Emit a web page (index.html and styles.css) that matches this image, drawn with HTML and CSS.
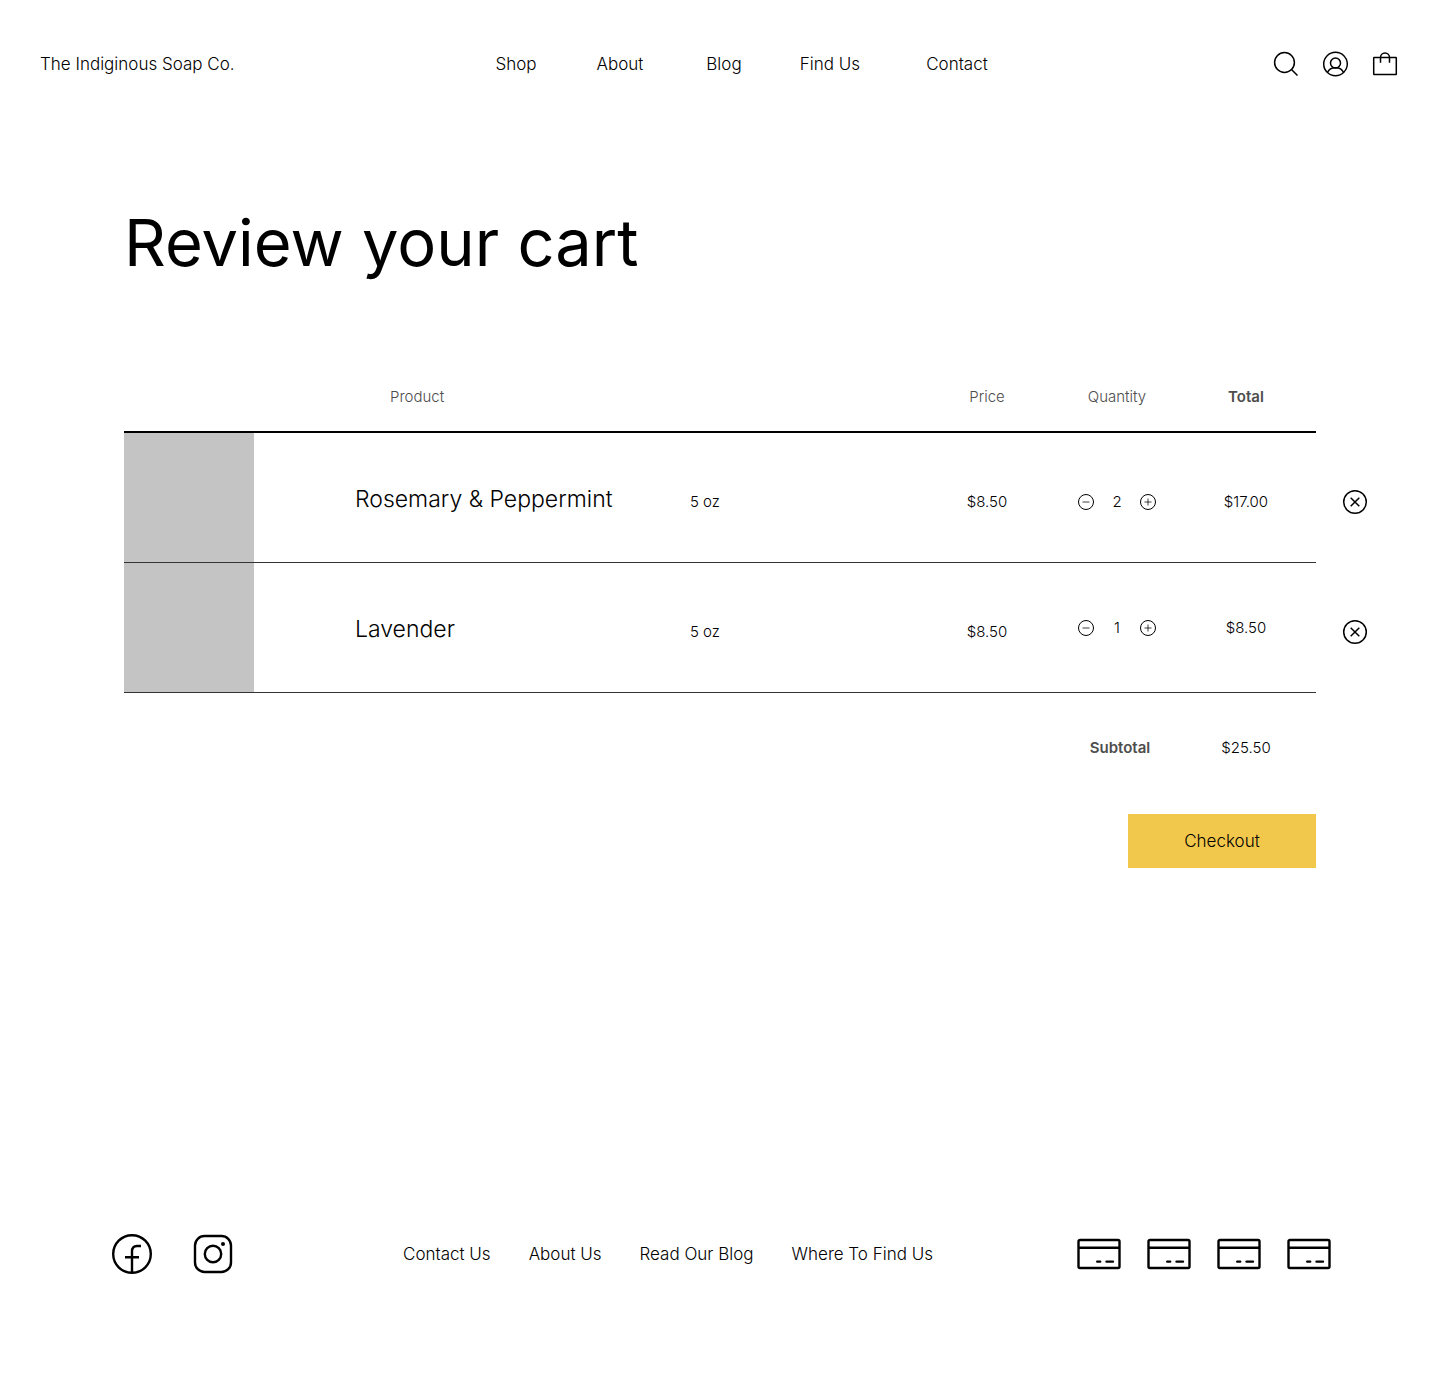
FILE: index.html
```html
<!DOCTYPE html>
<html lang="en">
<head>
<meta charset="utf-8">
<meta name="viewport" content="width=device-width, initial-scale=1">
<title>Review your cart – The Indiginous Soap Co.</title>
<link rel="stylesheet" href="styles.css">
</head>
<body>
<svg class="sprite" aria-hidden="true">
  <symbol id="minus" viewBox="0 0 18 18"><circle cx="9" cy="9" r="7.5"/><path opacity="0.75" d="M5.5 9h7"/></symbol>
  <symbol id="plus" viewBox="0 0 18 18"><circle cx="9" cy="9" r="7.5"/><path opacity="0.75" d="M5.5 9h7M9 5.5v7"/></symbol>
  <symbol id="remove" viewBox="0 0 26 26"><circle cx="13" cy="13" r="11.3"/><path d="M8.7 8.7l8.6 8.6M17.3 8.7l-8.6 8.6"/></symbol>
  <symbol id="card" viewBox="0 0 44 32"><rect x="1.5" y="2" width="41" height="28" rx="1.5"/><path d="M1.500 9.800h41"/><path stroke-linecap="round" d="M20.200 23.600h3M29.500 23.600h6.500"/></symbol>
</svg>

<header class="site-header">
  <a class="brand" href="#">The Indiginous Soap Co.</a>
  <nav class="main-nav" aria-label="Main">
    <a href="#">Shop</a>
    <a href="#">About</a>
    <a href="#">Blog</a>
    <a href="#">Find Us</a>
    <a href="#">Contact</a>
  </nav>
  <div class="tools">
    <button type="button" aria-label="Search"><svg width="26" height="26" viewBox="0 0 26 26"><circle cx="12.500" cy="11.500" r="9.900"/><path d="M19.500 18.500l6 6"/></svg></button>
    <button type="button" aria-label="Account"><svg width="26" height="26" viewBox="0 0 26 26"><circle cx="13.500" cy="13" r="11.800"/><circle cx="13.500" cy="12" r="5"/><path d="M5.500 21.500c1.200-3 4.500-4.700 8-4.700s6.800 1.700 8 4.700"/></svg></button>
    <button type="button" aria-label="Cart"><svg width="26" height="26" viewBox="0 0 26 26"><rect x="1.700" y="6.500" width="22.600" height="17" rx="0.500"/><path d="M8.500 11.800V6.500a4.500 4.500 0 0 1 9 0v5.300"/></svg></button>
  </div>
</header>

<main class="cart">
  <h1>Review your cart</h1>
  <table class="items">
    <colgroup>
      <col class="col-image"><col class="col-name"><col class="col-size"><col class="col-price"><col class="col-quantity"><col class="col-total"><col class="col-remove">
    </colgroup>
    <thead>
      <tr>
        <td></td>
        <th scope="col" class="product-heading">Product</th>
        <td></td>
        <th scope="col">Price</th>
        <th scope="col">Quantity</th>
        <th scope="col" class="strong">Total</th>
        <td class="outside"></td>
      </tr>
    </thead>
    <tbody>
      <tr>
        <td class="thumb"></td>
        <th scope="row" class="name">Rosemary &amp; Peppermint</th>
        <td class="size low">5 oz</td>
        <td class="low">$8.50</td>
        <td class="low">
          <div class="stepper">
            <button type="button" aria-label="Remove one Rosemary &amp; Peppermint"><svg width="18" height="18"><use href="#minus"/></svg></button>
            <output>2</output>
            <button type="button" aria-label="Add one Rosemary &amp; Peppermint"><svg width="18" height="18"><use href="#plus"/></svg></button>
          </div>
        </td>
        <td class="low">$17.00</td>
        <td class="outside low"><button type="button" class="remove" aria-label="Delete Rosemary &amp; Peppermint"><svg width="26" height="26"><use href="#remove"/></svg></button></td>
      </tr>
      <tr>
        <td class="thumb"></td>
        <th scope="row" class="name">Lavender</th>
        <td class="size low">5 oz</td>
        <td class="low">$8.50</td>
        <td>
          <div class="stepper">
            <button type="button" aria-label="Remove one Lavender"><svg width="18" height="18"><use href="#minus"/></svg></button>
            <output>1</output>
            <button type="button" aria-label="Add one Lavender"><svg width="18" height="18"><use href="#plus"/></svg></button>
          </div>
        </td>
        <td>$8.50</td>
        <td class="outside low"><button type="button" class="remove" aria-label="Delete Lavender"><svg width="26" height="26"><use href="#remove"/></svg></button></td>
      </tr>
    </tbody>
    <tfoot>
      <tr>
        <td colspan="4"></td>
        <th scope="row" class="strong">Subtotal</th>
        <td>$25.50</td>
        <td></td>
      </tr>
    </tfoot>
  </table>
  <button type="button" class="checkout">Checkout</button>
</main>

<footer class="site-footer">
  <div class="social">
    <a href="#" aria-label="Facebook"><svg width="42" height="42" viewBox="0 0 42 42"><circle cx="21" cy="21" r="18.800"/><path d="M21 39.500V18.500c0-3.800 2-5.500 5-5.500h4M14 24.200h14"/></svg></a>
    <a href="#" aria-label="Instagram"><svg width="42" height="42" viewBox="0 0 42 42"><rect x="3" y="3" width="36" height="36" rx="9.500"/><circle cx="21" cy="21" r="8.200"/><circle class="dot" cx="31" cy="11" r="2"/></svg></a>
  </div>
  <nav class="footer-nav" aria-label="Footer">
    <a href="#">Contact Us</a>
    <a href="#">About Us</a>
    <a href="#">Read Our Blog</a>
    <a href="#">Where To Find Us</a>
  </nav>
  <div class="cards">
    <svg width="44" height="32"><use href="#card"/></svg>
    <svg width="44" height="32"><use href="#card"/></svg>
    <svg width="44" height="32"><use href="#card"/></svg>
    <svg width="44" height="32"><use href="#card"/></svg>
  </div>
</footer>
</body>
</html>
```
FILE: styles.css
```css
*, *::before, *::after { box-sizing: border-box; }

body {
  margin: 0;
  min-height: 100vh;
  display: flex;
  flex-direction: column;
  background: #fff;
  color: #000;
  font: 300 17px/24px Inter, "Liberation Sans", sans-serif;
}

a { color: inherit; text-decoration: none; white-space: nowrap; }

button {
  padding: 0;
  border: 0;
  background: none;
  color: inherit;
  font: inherit;
  cursor: pointer;
}

svg { display: block; fill: none; stroke: currentColor; stroke-width: 1.5; }
.sprite { position: absolute; width: 0; height: 0; }

/* Header */
.site-header {
  display: grid;
  grid-template-columns: 424px 1fr auto;
  align-items: center;
  padding: 51px 42px 51px 40px;
}

.main-nav {
  display: grid;
  grid-template-columns: 104px 104px 104px 108px 146px;
  text-align: center;
}

.tools { display: flex; gap: 24px; }

/* Cart */
.cart { padding: 72px 72px 0 124px; }

h1 {
  margin: 0;
  font-size: 65px;
  font-weight: 400;
  line-height: 86px;
}

.items {
  width: 100%;
  margin-top: 76px;
  table-layout: fixed;
  border-collapse: separate;
  border-spacing: 0;
  font-size: 15px;
  text-align: center;
}

.items th { font-weight: 300; }
.items th, .items td { padding: 0; }

.col-image { width: 130px; }
.col-size { width: 226px; }
.col-price { width: 142px; }
.col-quantity { width: 118px; }
.col-total { width: 140px; }
.col-remove { width: 52px; }

.items thead th, .items thead td {
  height: 71px;
  border-bottom: 2px solid #000;
  color: #4d4d4d;
}

.items .product-heading { padding-left: 136px; text-align: left; }
.items .strong { color: #4d4d4d; font-weight: 600; }

.items tbody th, .items tbody td {
  height: 130px;
  border-bottom: 1px solid #333;
}

.items thead .outside, .items tbody .outside { border-bottom: 0; }
.items tbody .low { padding-top: 8px; }
.items .thumb { background: #c4c4c4; }
.items tbody .name { padding: 2px 0 0 101px; font-size: 23px; text-align: left; white-space: nowrap; }
.items .size { text-align: left; }

.stepper {
  display: flex;
  align-items: center;
  justify-content: center;
  gap: 12px;
}

.stepper output { width: 20px; }
.stepper svg { stroke-width: 1; }
.remove { display: block; margin-left: auto; }

.items tfoot th, .items tfoot td { height: 110px; }
.items tfoot th { padding-left: 6px; }

.checkout {
  display: block;
  width: 188px;
  height: 54px;
  margin: 11px 52px 0 auto;
  background: #f2c84c;
}

/* Footer */
.site-footer {
  display: grid;
  grid-template-columns: 292px 1fr auto;
  align-items: center;
  margin-top: auto;
  padding: 64px 109px 115px 111px;
}

.site-footer svg { stroke-width: 2.4; }
.site-footer .dot { fill: currentColor; stroke: none; }
.social { display: flex; gap: 39px; }
.footer-nav { display: flex; gap: 38px; }
.cards { display: flex; gap: 26px; }
```
